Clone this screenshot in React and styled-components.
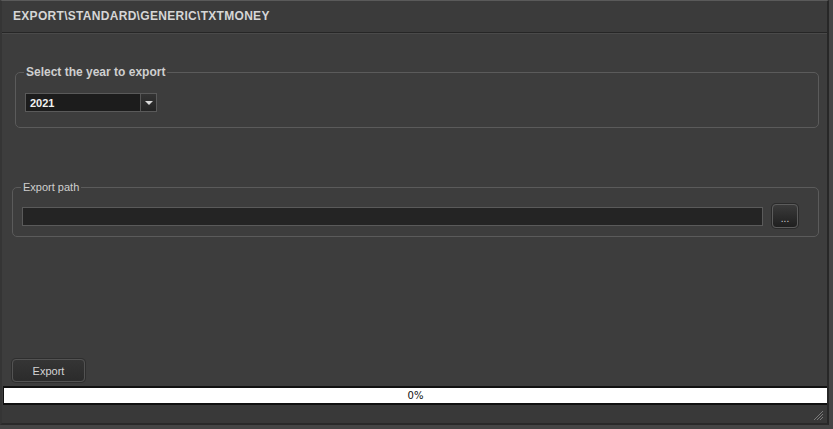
import React from "react";
import styled, { createGlobalStyle } from "styled-components";

const GlobalStyle = createGlobalStyle`
  html, body {
    margin: 0;
    padding: 0;
    background: #454545;
  }
  * {
    box-sizing: border-box;
  }
`;

const Window = styled.div`
  width: 829px;
  height: 425px;
  display: flex;
  flex-direction: column;
  background: #3d3d3d;
  border-top: 1px solid #5a5a5a;
  border-left: 2px solid #353535;
  border-right: 2px solid #272727;
  border-bottom: 2px solid #2a2a2a;
  font-family: "Liberation Sans", Arial, sans-serif;
`;

const TitleBar = styled.div`
  height: 32px;
  flex-shrink: 0;
  display: flex;
  align-items: center;
  padding-left: 11px;
  padding-bottom: 1px;
  background: #3b3b3b;
  color: #d6d6d6;
  font-size: 12px;
  font-weight: bold;
  letter-spacing: 0.3px;
  border-bottom: 1px solid #262626;
  box-shadow: 0 1px 0 #4a4a4a;
`;

const Body = styled.div`
  flex: 1;
  display: flex;
  flex-direction: column;
  padding: 33px 8px 4px 10px;
`;

const Gap = styled.div`
  height: ${(p) => p.$size}px;
  flex-shrink: 0;
`;

const Group = styled.fieldset`
  margin: 0 0 0 ${(p) => p.$indent}px;
  border: 1px solid #5b5b5b;
  border-radius: 5px;
  padding: ${(p) => p.$pad};
  min-width: 0;
`;

const Legend = styled.legend`
  padding: 0 2px;
  margin-left: -1px;
  font-size: ${(p) => (p.$bold ? 12 : 11)}px;
  line-height: 13px;
  color: #cfcfcf;
  font-weight: ${(p) => (p.$bold ? "bold" : "normal")};
`;

const Select = styled.div`
  width: 132px;
  height: 19px;
  display: flex;
  border: 1px solid #5a5a5a;
  background: #1c1c1c;
`;

const SelectValue = styled.div`
  flex: 1;
  display: flex;
  align-items: center;
  padding-left: 4px;
  color: #f0f0f0;
  font-size: 11px;
  font-weight: bold;
`;

const SelectArrow = styled.div`
  width: 16px;
  display: flex;
  align-items: center;
  justify-content: center;
  border-left: 1px solid #555;
  background: linear-gradient(#333, #242424);
  &::after {
    content: "";
    border-left: 4px solid transparent;
    border-right: 4px solid transparent;
    border-top: 4px solid #d8d8d8;
  }
`;

const PathRow = styled.div`
  display: flex;
  align-items: center;
  gap: 9px;
`;

const PathInput = styled.div`
  width: 741px;
  height: 19px;
  border: 1px solid #5a5a5a;
  background: #242424;
`;

const BrowseButton = styled.div`
  width: 26px;
  height: 24px;
  border: 1px solid #5c5c5c;
  border-radius: 4px;
  background: linear-gradient(#3a3a3a, #1f1f1f);
  box-shadow: 0 0 0 1px #2a2a2a;
  color: #cfcfcf;
  font-size: 10px;
  display: flex;
  align-items: flex-end;
  justify-content: center;
  padding-bottom: 4px;
  line-height: 8px;
`;

const Spacer = styled.div`
  flex: 1;
`;

const Button = styled.div`
  width: 73px;
  height: 23px;
  display: flex;
  align-items: center;
  justify-content: center;
  border: 1px solid #535353;
  border-radius: 4px;
  background: linear-gradient(#353535, #2b2b2b);
  box-shadow: 0 0 0 1px #2e2e2e;
  color: #d4d4d4;
  font-size: 11px;
`;

const Progress = styled.div`
  height: 19px;
  margin-left: 1px;
  background: #fff;
  border-top: 2px solid #111;
  border-bottom: 2px solid #111;
  border-left: 1px solid #111;
  display: flex;
  align-items: center;
  justify-content: center;
  color: #111;
  font-family: "DejaVu Sans", sans-serif;
  font-size: 10px;
`;

const StatusBar = styled.div`
  height: 18px;
  flex-shrink: 0;
  display: flex;
  justify-content: flex-end;
  align-items: flex-end;
  padding: 0 3px 2px 0;
  background: #393939;
`;

const Grip = () => (
  <svg width="11" height="11" viewBox="0 0 11 11">
    <g stroke="#7a7a7a" strokeWidth="1">
      <line x1="10" y1="1" x2="1" y2="10" />
      <line x1="10" y1="4" x2="4" y2="10" />
      <line x1="10" y1="7" x2="7" y2="10" />
    </g>
  </svg>
);

export default function App() {
  return (
    <>
      <GlobalStyle />
      <Window>
        <TitleBar>EXPORT\STANDARD\GENERIC\TXTMONEY</TitleBar>
        <Body>
          <Group $indent={3} $pad="14px 9px 15px 9px">
            <Legend $bold>Select the year to export</Legend>
            <Select>
              <SelectValue>2021</SelectValue>
              <SelectArrow />
            </Select>
          </Group>
          <Gap $size={53} />
          <Group $indent={0} $pad="10px 9px 8px 9px">
            <Legend>Export path</Legend>
            <PathRow>
              <PathInput />
              <BrowseButton>...</BrowseButton>
            </PathRow>
          </Group>
          <Spacer />
          <Button>Export</Button>
        </Body>
        <Progress>0%</Progress>
        <StatusBar>
          <Grip />
        </StatusBar>
      </Window>
    </>
  );
}
